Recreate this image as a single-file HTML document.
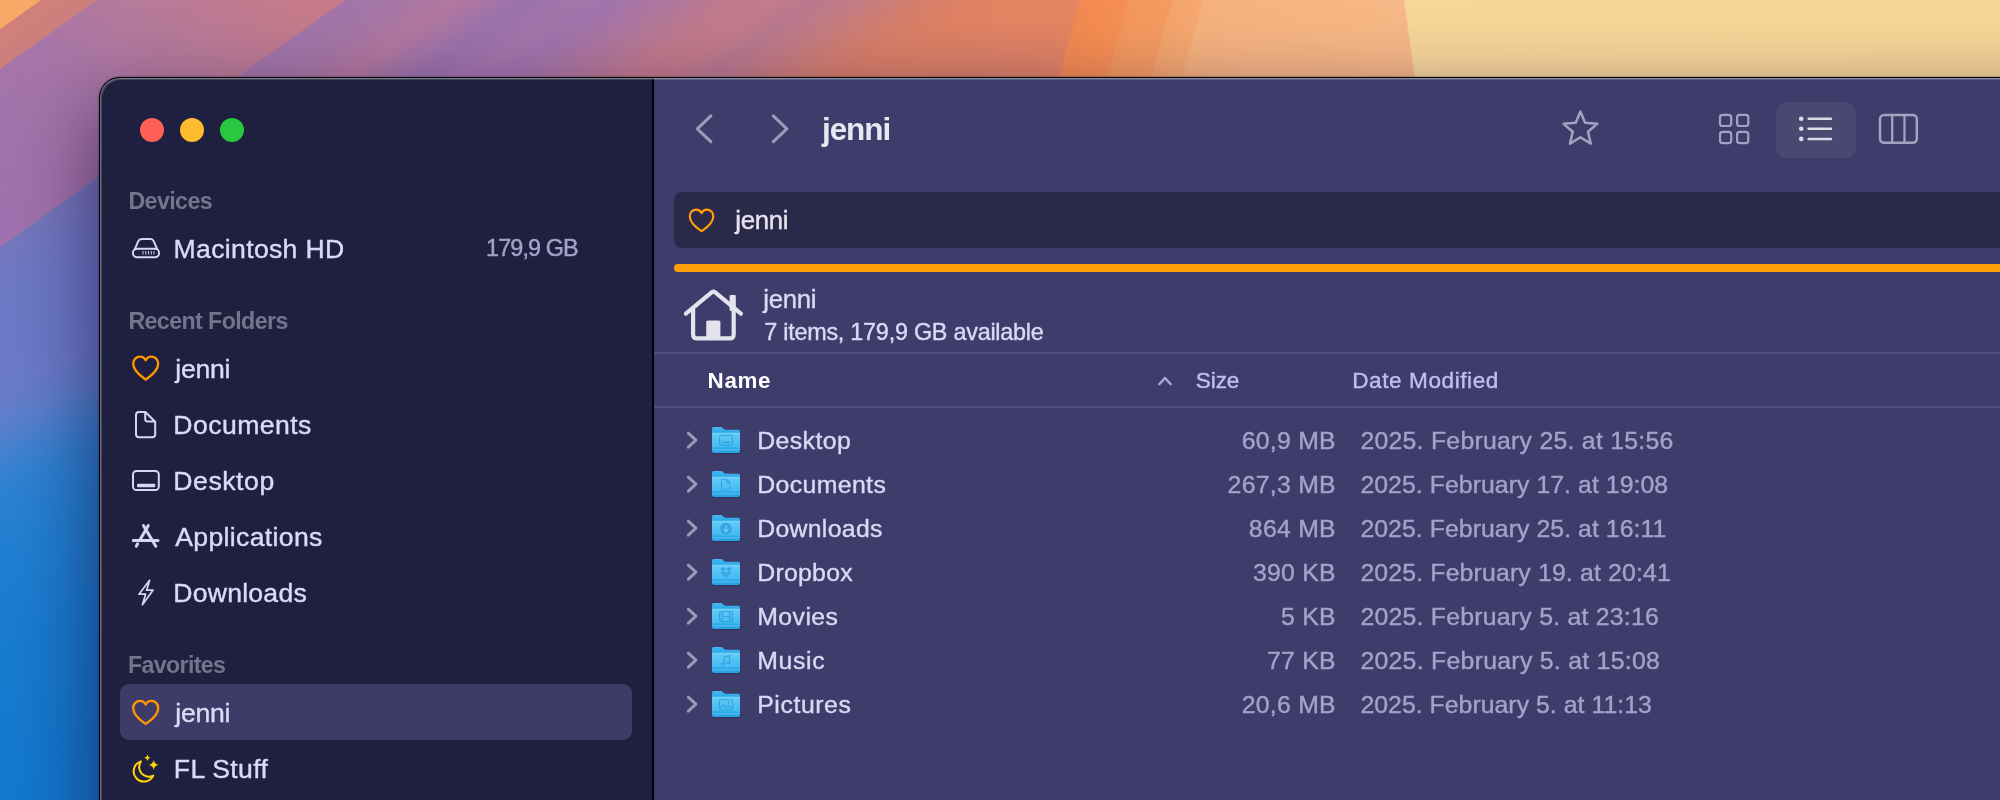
<!DOCTYPE html>
<html><head><meta charset="utf-8"><title>jenni</title>
<style>
*{margin:0;padding:0;box-sizing:border-box}
html,body{width:2000px;height:800px;overflow:hidden;background:#1a7bd0}
body{position:relative;font-family:"Liberation Sans",sans-serif}
.abs{position:absolute}
#wall{position:absolute;left:0;top:0}
#win{position:absolute;left:99px;top:77px;width:2000px;height:800px;border-radius:21px 0 0 0;background:#000;
 box-shadow:0 32px 80px 4px rgba(25,8,55,.6),0 0 2px rgba(0,0,0,.6)}
#side{position:absolute;left:1px;top:1px;width:552px;height:800px;background:#1f1f3f;border-radius:20px 0 0 0}
#main{position:absolute;left:555px;top:1px;width:1500px;height:800px;background:#3d3c6a}
#hl{position:absolute;left:1px;top:1px;width:2000px;height:800px;border-radius:20px 0 0 0;border-top:1px solid rgba(255,255,255,.40);border-left:1px solid rgba(255,255,255,.34);box-shadow:inset 1px 1px 0 rgba(255,255,255,.17);pointer-events:none}
#hl2{position:absolute;left:552px;top:1px;width:4px;height:2px;background:#000}
.tl{position:absolute;top:118px;width:24px;height:24px;border-radius:50%}
.t{position:absolute;white-space:pre;line-height:32px;font-family:"Liberation Sans",sans-serif}
#sel{position:absolute;left:120px;top:684px;width:512px;height:56px;border-radius:9px;background:#3d3c69}
#pathbar{position:absolute;left:674px;top:192px;width:1400px;height:56px;border-radius:8px;background:#2a2949}
#obar{position:absolute;left:674px;top:264px;width:1400px;height:8px;border-radius:4px;background:#ff9f0a}
.sep{position:absolute;left:654px;width:1400px;height:2px;background:#4f4e7b}
#lbtn{position:absolute;left:1776px;top:102px;width:80px;height:56px;border-radius:11px;background:#4a4871}
#icons{position:absolute;left:0;top:0}
#txt{position:absolute;left:0;top:0;width:2000px;height:800px;will-change:transform}
.r{-webkit-text-stroke:0.4px currentColor}
</style></head>
<body>
<svg id="wall" width="2000" height="800" viewBox="0 0 2000 800">
<defs>
<linearGradient id="gt" gradientUnits="userSpaceOnUse" x1="0" y1="0" x2="1200.0" y2="0" gradientTransform="skewX(-54.46)"><stop offset="0.0000" stop-color="#f8a968"/><stop offset="0.0333" stop-color="#f8a968"/><stop offset="0.0350" stop-color="#d0807a"/><stop offset="0.0800" stop-color="#cc7f7e"/><stop offset="0.0825" stop-color="#b0789f"/><stop offset="0.1467" stop-color="#b3799f"/><stop offset="0.2133" stop-color="#b97a97"/><stop offset="0.2800" stop-color="#c57b8b"/><stop offset="0.2867" stop-color="#c47b8a"/><stop offset="0.2883" stop-color="#a175a9"/><stop offset="0.3333" stop-color="#a676a6"/><stop offset="0.3800" stop-color="#b2789e"/><stop offset="0.4133" stop-color="#a575a8"/><stop offset="0.4383" stop-color="#9b72ad"/><stop offset="0.4800" stop-color="#a475ab"/><stop offset="0.5133" stop-color="#a274ac"/><stop offset="0.5633" stop-color="#b0779c"/><stop offset="0.6133" stop-color="#c07a8c"/><stop offset="0.6467" stop-color="#c27b8b"/><stop offset="0.6800" stop-color="#b8798f"/><stop offset="0.7133" stop-color="#c27c84"/><stop offset="0.7550" stop-color="#d07e72"/><stop offset="0.7967" stop-color="#dc8066"/><stop offset="0.8383" stop-color="#e28361"/><stop offset="1.0000" stop-color="#e38462"/></linearGradient>
<linearGradient id="gm" gradientUnits="userSpaceOnUse" x1="1000" y1="0" x2="1350" y2="0" gradientTransform="skewX(-15)"><stop offset="0.0000" stop-color="#e38462"/><stop offset="0.2200" stop-color="#e48462"/><stop offset="0.2343" stop-color="#f18a53"/><stop offset="0.3000" stop-color="#f58c50"/><stop offset="0.3629" stop-color="#f48f55"/><stop offset="0.3714" stop-color="#f4975d"/><stop offset="0.4886" stop-color="#f49b62"/><stop offset="0.4971" stop-color="#f4a46c"/><stop offset="0.5743" stop-color="#f5a870"/><stop offset="0.5857" stop-color="#f5b17d"/><stop offset="0.7143" stop-color="#f5b381"/><stop offset="1.0000" stop-color="#f5b683"/></linearGradient>
<linearGradient id="gr" gradientUnits="userSpaceOnUse" x1="1280" y1="0" x2="2100" y2="0" gradientTransform="skewX(8)"><stop offset="0.0000" stop-color="#f5b582"/><stop offset="0.1463" stop-color="#f6b886"/><stop offset="0.1500" stop-color="#f6b886"/><stop offset="0.1524" stop-color="#f7d699"/><stop offset="0.8780" stop-color="#f6d596"/><stop offset="1.0000" stop-color="#f6d596"/></linearGradient>
<linearGradient id="gl" gradientUnits="userSpaceOnUse" x1="0" y1="240" x2="0" y2="900" gradientTransform="skewY(-25)"><stop offset="0.0000" stop-color="#7677bd"/><stop offset="0.0455" stop-color="#7078c2"/><stop offset="0.1061" stop-color="#6c79c6"/><stop offset="0.2303" stop-color="#6a7bca"/><stop offset="0.2848" stop-color="#5c7fcc"/><stop offset="0.3303" stop-color="#4382d0"/><stop offset="0.3788" stop-color="#2f82d2"/><stop offset="0.4621" stop-color="#2280d2"/><stop offset="0.6212" stop-color="#187cd0"/><stop offset="0.8485" stop-color="#1378cf"/><stop offset="1.0000" stop-color="#1378cf"/></linearGradient>
<linearGradient id="gband" gradientUnits="userSpaceOnUse" x1="-68.6" y1="122.8" x2="228.6" y2="-100"><stop offset="0.000" stop-color="#9f72af"/><stop offset="0.231" stop-color="#a474ab"/><stop offset="0.385" stop-color="#a876a8"/><stop offset="0.538" stop-color="#b2799f"/><stop offset="0.692" stop-color="#b87a98"/><stop offset="0.846" stop-color="#bf7a90"/><stop offset="1.000" stop-color="#c67b89"/></linearGradient>
<radialGradient id="gpk" gradientUnits="userSpaceOnUse" cx="960" cy="100" r="170" gradientTransform="translate(0 100) scale(1 .5) translate(0 -100)"><stop offset="0" stop-color="#b06c84" stop-opacity=".26"/><stop offset=".6" stop-color="#b87080" stop-opacity=".14"/><stop offset="1" stop-color="#c87a76" stop-opacity="0"/></radialGradient>
</defs>
<rect x="0" y="0" width="1100" height="800" fill="url(#gt)"/>
<rect x="990" y="0" width="330" height="100" fill="url(#gm)"/>
<rect x="1290" y="0" width="710" height="100" fill="url(#gr)"/>
<polygon points="780,0 1078,0 1056,100 780,100" fill="url(#gpk)"/>
<polygon points="0,69.3 97,0 345,0 0,246.4" fill="url(#gband)"/>
<polygon points="0,247 236,78 236,800 0,800" fill="url(#gl)"/>
</svg>
<div id="win"><div id="side"></div><div id="main"></div><div id="hl"></div></div>
<div class="tl" style="left:140px;background:#ff5f57"></div>
<div class="tl" style="left:180px;background:#febc2e"></div>
<div class="tl" style="left:220px;background:#28c840"></div>
<div id="sel"></div>
<div id="pathbar"></div>
<div id="obar"></div>
<div class="sep" style="top:352px"></div>
<div class="sep" style="top:406px"></div>
<div id="lbtn"></div>
<svg id="icons" width="2000" height="800" viewBox="0 0 2000 800">
<defs>
<linearGradient id="fback" x1="0" y1="0" x2="0" y2="1"><stop offset="0" stop-color="#43b9f0"/><stop offset="1" stop-color="#1697dc"/></linearGradient>
<linearGradient id="ffront" x1="0" y1="0" x2="0" y2="1"><stop offset="0" stop-color="#78d5fa"/><stop offset=".12" stop-color="#5fc9f6"/><stop offset=".7" stop-color="#44baf2"/><stop offset=".76" stop-color="#33aeea"/><stop offset="1" stop-color="#24a1e3"/></linearGradient>
</defs>
<g fill="none" stroke="#d6d5f3" stroke-width="2" stroke-linejoin="round"><path d="M134.5 249.8 L138.3 241.1 Q139.2 239 141.6 239 H150.4 Q152.8 239 153.7 241.1 L157.5 249.8"/><rect x="132.9" y="248.7" width="26.2" height="8.6" rx="4.3"/></g>
<path d="M143 251V254.6M145.75 251V254.6M148.5 251V254.6M151.25 251V254.6M154 251V254.6" stroke="#d6d5f3" stroke-width="1.1" opacity=".9"/>
<path d="M145.70 379.50 C144.31 378.50 133.20 371.73 133.20 363.57 C133.20 359.59 136.28 356.60 140.05 356.60 C142.53 356.60 144.61 357.99 145.70 360.28 C146.79 357.99 148.87 356.60 151.35 356.60 C155.12 356.60 158.20 359.59 158.20 363.57 C158.20 371.73 147.09 378.50 145.70 379.50Z" fill="none" stroke="#ff9500" stroke-width="2.4" stroke-linejoin="round"/>
<path d="M145.70 723.90 C144.31 722.90 133.20 716.10 133.20 707.90 C133.20 703.90 136.28 700.90 140.05 700.90 C142.53 700.90 144.61 702.30 145.70 704.60 C146.79 702.30 148.87 700.90 151.35 700.90 C155.12 700.90 158.20 703.90 158.20 707.90 C158.20 716.10 147.09 722.90 145.70 723.90Z" fill="none" stroke="#ff9500" stroke-width="2.4" stroke-linejoin="round"/>
<path d="M701.55 231.10 C700.24 230.17 689.80 223.81 689.80 216.14 C689.80 212.40 692.69 209.60 696.23 209.60 C698.57 209.60 700.52 210.91 701.55 213.06 C702.58 210.91 704.53 209.60 706.87 209.60 C710.41 209.60 713.30 212.40 713.30 216.14 C713.30 223.81 702.86 230.17 701.55 231.10Z" fill="none" stroke="#ff9f0a" stroke-width="2.2" stroke-linejoin="round"/>
<path d="M139 412H145.4L155.2 421.8V434.2Q155.2 437.2 152.2 437.2H139Q136 437.2 136 434.2V415Q136 412 139 412ZM145.2 412.3V419Q145.2 421.6 147.8 421.6H154.8" fill="none" stroke="#d6d5f3" stroke-width="2" stroke-linejoin="round"/>
<rect x="133" y="470.9" width="25.8" height="19.2" rx="3.6" fill="none" stroke="#d6d5f3" stroke-width="2"/><rect x="137" y="483.7" width="18.2" height="3.5" rx="1" fill="#d6d5f3"/>
<path d="M148.3 525.6L139.6 540.4M137.6 543.8L136.3 546.2M143.4 525.6L155.8 546.2M133.3 540.6H158" fill="none" stroke="#d6d5f3" stroke-width="3" stroke-linecap="round"/>
<path d="M149.6 580.2L139 594.2H145.6L142.4 604.8L153 590.2H146.6Z" fill="none" stroke="#d6d5f3" stroke-width="1.7" stroke-linejoin="round"/>
<path d="M140.9 761.4A10.3 10.3 0 1 0 153.3 775.6A9.7 9.7 0 0 1 140.9 761.4Z" fill="none" stroke="#ffd60a" stroke-width="2" stroke-linejoin="round"/>
<path d="M147.4 754.4Q147.8 757.3 150.6 757.7Q147.8 758.1 147.4 761Q147 758.1 144.2 757.7Q147 757.3 147.4 754.4Z" fill="#ffd60a"/>
<path d="M153.7 759.9Q154.3 764.3 158.7 764.9Q154.3 765.5 153.7 769.9Q153.1 765.5 148.7 764.9Q153.1 764.3 153.7 759.9Z" fill="#ffd60a"/>
<path d="M710.9 115.9L697.3 128.8L710.9 141.7" fill="none" stroke="#9c9bb9" stroke-width="3" stroke-linecap="round" stroke-linejoin="round"/>
<path d="M773.3 115.9L786.9 128.8L773.3 141.7" fill="none" stroke="#9c9bb9" stroke-width="3" stroke-linecap="round" stroke-linejoin="round"/>
<polygon points="1580.40,111.60 1585.10,122.83 1597.23,123.83 1588.01,131.77 1590.80,143.62 1580.40,137.30 1570.00,143.62 1572.79,131.77 1563.57,123.83 1575.70,122.83" fill="none" stroke="#a3a2c0" stroke-width="2.5" stroke-linejoin="round"/>
<rect x="1720.0" y="114.8" width="11.2" height="11.2" rx="2.6" fill="none" stroke="#a3a2c0" stroke-width="2.2"/>
<rect x="1720.0" y="131.9" width="11.2" height="11.2" rx="2.6" fill="none" stroke="#a3a2c0" stroke-width="2.2"/>
<rect x="1737.1" y="114.8" width="11.2" height="11.2" rx="2.6" fill="none" stroke="#a3a2c0" stroke-width="2.2"/>
<rect x="1737.1" y="131.9" width="11.2" height="11.2" rx="2.6" fill="none" stroke="#a3a2c0" stroke-width="2.2"/>
<circle cx="1801.2" cy="118.8" r="2.3" fill="#dcdbea"/><path d="M1808.6 118.8H1831" stroke="#dcdbea" stroke-width="2.5" stroke-linecap="round"/>
<circle cx="1801.2" cy="128.8" r="2.3" fill="#dcdbea"/><path d="M1808.6 128.8H1831" stroke="#dcdbea" stroke-width="2.5" stroke-linecap="round"/>
<circle cx="1801.2" cy="138.9" r="2.3" fill="#dcdbea"/><path d="M1808.6 138.9H1831" stroke="#dcdbea" stroke-width="2.5" stroke-linecap="round"/>
<rect x="1880" y="114.9" width="36.8" height="27.9" rx="4" fill="none" stroke="#a3a2c0" stroke-width="2.5"/><path d="M1892.2 115V142.8M1904.5 115V142.8" stroke="#a3a2c0" stroke-width="2.3"/>
<g fill="none" stroke="#e3e2ed" stroke-width="4.2" stroke-linecap="round" stroke-linejoin="round"><path d="M685.9 313.6L711.6 292.4Q713.4 291 715.2 292.4L740.9 313.6"/><path d="M693.1 309V334.4Q693.1 338.4 697.1 338.4H729.7Q733.7 338.4 733.7 334.4V309"/></g>
<rect x="729.6" y="294.9" width="6.2" height="16" rx="1" fill="#e3e2ed"/>
<path d="M706.2 338.6V322Q706.2 320.4 707.8 320.4H718.8Q720.4 320.4 720.4 322V338.6Z" fill="#e3e2ed"/>
<path d="M1159.3 384.2L1165 378L1170.7 384.2" fill="none" stroke="#a9a8d6" stroke-width="2.4" stroke-linecap="round" stroke-linejoin="round"/>
<path d="M688.3 433.2L695.9 440.2L688.3 447.2" fill="none" stroke="#9a99b6" stroke-width="3" stroke-linecap="round" stroke-linejoin="round"/>
<g transform="translate(712,426.8)"><path d="M1.2 26.6 H26.8 Q28.3 26.6 28.3 25.4 V24 H-0.3 V25.4 Q-0.3 26.6 1.2 26.6Z" fill="#15142e" opacity=".55"/><path d="M0 1.8 Q0 0.2 1.6 0.2 H8.6 Q9.8 0.2 10.6 1 L12 2.3 Q12.7 2.9 13.8 2.9 H26.4 Q28 2.9 28 4.5 V12 H0Z" fill="url(#fback)"/><path d="M0 7.2 Q0 5.9 1.3 5.9 H26.7 Q28 5.9 28 7.2 V24.7 Q28 26.1 26.6 26.1 H1.4 Q0 26.1 0 24.7Z" fill="url(#ffront)"/><rect x="0" y="20.9" width="28" height="1.1" fill="#1d9fe0" opacity=".55"/><rect x="0" y="22.1" width="28" height="1.5" fill="#7fd6fb" opacity=".38"/><rect x="7.6" y="8.6" width="12.8" height="10" rx="1.8" fill="none" stroke="#2f9ce0" stroke-width="1.1" opacity=".8"/><path d="M10.3 15.6H17.7" stroke="#2f9ce0" stroke-width="1.4" opacity=".85"/></g>
<path d="M688.3 477.2L695.9 484.2L688.3 491.2" fill="none" stroke="#9a99b6" stroke-width="3" stroke-linecap="round" stroke-linejoin="round"/>
<g transform="translate(712,470.8)"><path d="M1.2 26.6 H26.8 Q28.3 26.6 28.3 25.4 V24 H-0.3 V25.4 Q-0.3 26.6 1.2 26.6Z" fill="#15142e" opacity=".55"/><path d="M0 1.8 Q0 0.2 1.6 0.2 H8.6 Q9.8 0.2 10.6 1 L12 2.3 Q12.7 2.9 13.8 2.9 H26.4 Q28 2.9 28 4.5 V12 H0Z" fill="url(#fback)"/><path d="M0 7.2 Q0 5.9 1.3 5.9 H26.7 Q28 5.9 28 7.2 V24.7 Q28 26.1 26.6 26.1 H1.4 Q0 26.1 0 24.7Z" fill="url(#ffront)"/><rect x="0" y="20.9" width="28" height="1.1" fill="#1d9fe0" opacity=".55"/><rect x="0" y="22.1" width="28" height="1.5" fill="#7fd6fb" opacity=".38"/><path d="M10.3 8.4H14.6L17.8 11.6V18.6Q17.8 19.4 17 19.4H10.3Q9.5 19.4 9.5 18.6V9.2Q9.5 8.4 10.3 8.4ZM14.4 8.6V11.8H17.6" fill="none" stroke="#2f9ce0" stroke-width="1.1" opacity=".8"/></g>
<path d="M688.3 521.2L695.9 528.2L688.3 535.2" fill="none" stroke="#9a99b6" stroke-width="3" stroke-linecap="round" stroke-linejoin="round"/>
<g transform="translate(712,514.8)"><path d="M1.2 26.6 H26.8 Q28.3 26.6 28.3 25.4 V24 H-0.3 V25.4 Q-0.3 26.6 1.2 26.6Z" fill="#15142e" opacity=".55"/><path d="M0 1.8 Q0 0.2 1.6 0.2 H8.6 Q9.8 0.2 10.6 1 L12 2.3 Q12.7 2.9 13.8 2.9 H26.4 Q28 2.9 28 4.5 V12 H0Z" fill="url(#fback)"/><path d="M0 7.2 Q0 5.9 1.3 5.9 H26.7 Q28 5.9 28 7.2 V24.7 Q28 26.1 26.6 26.1 H1.4 Q0 26.1 0 24.7Z" fill="url(#ffront)"/><rect x="0" y="20.9" width="28" height="1.1" fill="#1d9fe0" opacity=".55"/><rect x="0" y="22.1" width="28" height="1.5" fill="#7fd6fb" opacity=".38"/><circle cx="14" cy="13.8" r="5.9" fill="#2f9ce0" opacity=".8"/><path d="M14 10.6V16.6M11.5 14.4L14 16.9L16.5 14.4" fill="none" stroke="#6fd0f8" stroke-width="1.3"/></g>
<path d="M688.3 565.2L695.9 572.2L688.3 579.2" fill="none" stroke="#9a99b6" stroke-width="3" stroke-linecap="round" stroke-linejoin="round"/>
<g transform="translate(712,558.8)"><path d="M1.2 26.6 H26.8 Q28.3 26.6 28.3 25.4 V24 H-0.3 V25.4 Q-0.3 26.6 1.2 26.6Z" fill="#15142e" opacity=".55"/><path d="M0 1.8 Q0 0.2 1.6 0.2 H8.6 Q9.8 0.2 10.6 1 L12 2.3 Q12.7 2.9 13.8 2.9 H26.4 Q28 2.9 28 4.5 V12 H0Z" fill="url(#fback)"/><path d="M0 7.2 Q0 5.9 1.3 5.9 H26.7 Q28 5.9 28 7.2 V24.7 Q28 26.1 26.6 26.1 H1.4 Q0 26.1 0 24.7Z" fill="url(#ffront)"/><rect x="0" y="20.9" width="28" height="1.1" fill="#1d9fe0" opacity=".55"/><rect x="0" y="22.1" width="28" height="1.5" fill="#7fd6fb" opacity=".38"/><g fill="#2f9ce0" opacity=".85"><path d="M11.1 8.2L14 10.1L11.1 12L8.2 10.1Z"/><path d="M16.9 8.2L19.8 10.1L16.9 12L14 10.1Z"/><path d="M11.1 12.2L14 14.1L11.1 16L8.2 14.1Z"/><path d="M16.9 12.2L19.8 14.1L16.9 16L14 14.1Z"/><path d="M14 15L16.7 16.8L14 18.6L11.3 16.8Z"/></g></g>
<path d="M688.3 609.2L695.9 616.2L688.3 623.2" fill="none" stroke="#9a99b6" stroke-width="3" stroke-linecap="round" stroke-linejoin="round"/>
<g transform="translate(712,602.8)"><path d="M1.2 26.6 H26.8 Q28.3 26.6 28.3 25.4 V24 H-0.3 V25.4 Q-0.3 26.6 1.2 26.6Z" fill="#15142e" opacity=".55"/><path d="M0 1.8 Q0 0.2 1.6 0.2 H8.6 Q9.8 0.2 10.6 1 L12 2.3 Q12.7 2.9 13.8 2.9 H26.4 Q28 2.9 28 4.5 V12 H0Z" fill="url(#fback)"/><path d="M0 7.2 Q0 5.9 1.3 5.9 H26.7 Q28 5.9 28 7.2 V24.7 Q28 26.1 26.6 26.1 H1.4 Q0 26.1 0 24.7Z" fill="url(#ffront)"/><rect x="0" y="20.9" width="28" height="1.1" fill="#1d9fe0" opacity=".55"/><rect x="0" y="22.1" width="28" height="1.5" fill="#7fd6fb" opacity=".38"/><rect x="7.6" y="8.8" width="12.8" height="10" rx="1.2" fill="none" stroke="#2f9ce0" stroke-width="1.1" opacity=".8"/><path d="M10.4 8.8V18.8M17.6 8.8V18.8M10.4 13.8H17.6M7.6 11.4H10.4M7.6 16.2H10.4M17.6 11.4H20.4M17.6 16.2H20.4" stroke="#2f9ce0" stroke-width="1" opacity=".8" fill="none"/></g>
<path d="M688.3 653.2L695.9 660.2L688.3 667.2" fill="none" stroke="#9a99b6" stroke-width="3" stroke-linecap="round" stroke-linejoin="round"/>
<g transform="translate(712,646.8)"><path d="M1.2 26.6 H26.8 Q28.3 26.6 28.3 25.4 V24 H-0.3 V25.4 Q-0.3 26.6 1.2 26.6Z" fill="#15142e" opacity=".55"/><path d="M0 1.8 Q0 0.2 1.6 0.2 H8.6 Q9.8 0.2 10.6 1 L12 2.3 Q12.7 2.9 13.8 2.9 H26.4 Q28 2.9 28 4.5 V12 H0Z" fill="url(#fback)"/><path d="M0 7.2 Q0 5.9 1.3 5.9 H26.7 Q28 5.9 28 7.2 V24.7 Q28 26.1 26.6 26.1 H1.4 Q0 26.1 0 24.7Z" fill="url(#ffront)"/><rect x="0" y="20.9" width="28" height="1.1" fill="#1d9fe0" opacity=".55"/><rect x="0" y="22.1" width="28" height="1.5" fill="#7fd6fb" opacity=".38"/><path d="M12.2 17.2V10.2L17.6 8.9V15.9" fill="none" stroke="#2f9ce0" stroke-width="1.2" opacity=".85"/><ellipse cx="10.9" cy="17.3" rx="1.7" ry="1.4" fill="#2f9ce0" opacity=".85"/><ellipse cx="16.3" cy="16" rx="1.7" ry="1.4" fill="#2f9ce0" opacity=".85"/></g>
<path d="M688.3 697.2L695.9 704.2L688.3 711.2" fill="none" stroke="#9a99b6" stroke-width="3" stroke-linecap="round" stroke-linejoin="round"/>
<g transform="translate(712,690.8)"><path d="M1.2 26.6 H26.8 Q28.3 26.6 28.3 25.4 V24 H-0.3 V25.4 Q-0.3 26.6 1.2 26.6Z" fill="#15142e" opacity=".55"/><path d="M0 1.8 Q0 0.2 1.6 0.2 H8.6 Q9.8 0.2 10.6 1 L12 2.3 Q12.7 2.9 13.8 2.9 H26.4 Q28 2.9 28 4.5 V12 H0Z" fill="url(#fback)"/><path d="M0 7.2 Q0 5.9 1.3 5.9 H26.7 Q28 5.9 28 7.2 V24.7 Q28 26.1 26.6 26.1 H1.4 Q0 26.1 0 24.7Z" fill="url(#ffront)"/><rect x="0" y="20.9" width="28" height="1.1" fill="#1d9fe0" opacity=".55"/><rect x="0" y="22.1" width="28" height="1.5" fill="#7fd6fb" opacity=".38"/><rect x="7.4" y="9" width="13.2" height="10" rx="1.6" fill="none" stroke="#2f9ce0" stroke-width="1.1" opacity=".8"/><path d="M8 17.6L11.6 13.8L14.2 16.4L16 14.8L20 18.4" fill="none" stroke="#2f9ce0" stroke-width="1.1" opacity=".8"/><circle cx="16.4" cy="12" r="1.1" fill="#2f9ce0" opacity=".8"/></g>
</svg>
<div id="txt">
<span class="t" style="left:128.40px;top:185px;font-size:23.2px;font-weight:700;color:#75748d;letter-spacing:-0.562px">Devices</span>
<span class="t r" style="left:173.60px;top:233px;font-size:26.6px;font-weight:400;color:#dbdbf7;letter-spacing:0.327px">Macintosh HD</span>
<span class="t r" style="left:486.00px;top:232px;font-size:23.4px;font-weight:400;color:#a3a3c9;letter-spacing:-0.875px">179,9 GB</span>
<span class="t" style="left:128.40px;top:305px;font-size:23.2px;font-weight:700;color:#75748d;letter-spacing:-0.586px">Recent Folders</span>
<span class="t r" style="left:175.20px;top:353px;font-size:26.6px;font-weight:400;color:#dbdbf7;letter-spacing:-0.220px">jenni</span>
<span class="t r" style="left:173.30px;top:409px;font-size:26.6px;font-weight:400;color:#dbdbf7;letter-spacing:0.449px">Documents</span>
<span class="t r" style="left:173.30px;top:465px;font-size:26.6px;font-weight:400;color:#dbdbf7;letter-spacing:0.555px">Desktop</span>
<span class="t r" style="left:175.30px;top:521px;font-size:26.6px;font-weight:400;color:#dbdbf7;letter-spacing:0.336px">Applications</span>
<span class="t r" style="left:173.30px;top:577px;font-size:26.6px;font-weight:400;color:#dbdbf7;letter-spacing:0.229px">Downloads</span>
<span class="t" style="left:128.00px;top:649px;font-size:23.2px;font-weight:700;color:#75748d;letter-spacing:-0.650px">Favorites</span>
<span class="t r" style="left:175.20px;top:697px;font-size:26.6px;font-weight:400;color:#dbdbf7;letter-spacing:-0.220px">jenni</span>
<span class="t r" style="left:173.80px;top:753px;font-size:26.6px;font-weight:400;color:#dbdbf7;letter-spacing:0.336px">FL Stuff</span>
<span class="t" style="left:822.00px;top:113px;font-size:31.5px;font-weight:700;color:#e7e6f1;letter-spacing:-1.088px">jenni</span>
<span class="t r" style="left:735.20px;top:204px;font-size:25.8px;font-weight:400;color:#e4e3ee;letter-spacing:-0.293px">jenni</span>
<span class="t r" style="left:763.20px;top:283px;font-size:25.8px;font-weight:400;color:#d9d9f5;letter-spacing:-0.293px">jenni</span>
<span class="t r" style="left:764.20px;top:316px;font-size:23.4px;font-weight:400;color:#d9d9f5;letter-spacing:-0.248px">7 items, 179,9 GB available</span>
<span class="t" style="left:707.60px;top:365px;font-size:22.4px;font-weight:700;color:#ffffff;letter-spacing:0.623px">Name</span>
<span class="t r" style="left:1195.80px;top:365px;font-size:22.6px;font-weight:400;color:#bfbef0;letter-spacing:-0.129px">Size</span>
<span class="t r" style="left:1352.20px;top:365px;font-size:22.6px;font-weight:400;color:#bfbef0;letter-spacing:0.564px">Date Modified</span>
<span class="t r" style="left:757.20px;top:425px;font-size:24.8px;font-weight:400;color:#d9d9f5;letter-spacing:0.437px">Desktop</span>
<span class="t r" style="left:1241.67px;top:425px;font-size:24.8px;font-weight:400;color:#a3a2c9;letter-spacing:0.270px">60,9 MB</span>
<span class="t r" style="left:1360.40px;top:425px;font-size:24.8px;font-weight:400;color:#a3a2c9;letter-spacing:0.264px">2025. February 25. at 15:56</span>
<span class="t r" style="left:757.20px;top:469px;font-size:24.8px;font-weight:400;color:#d9d9f5;letter-spacing:0.398px">Documents</span>
<span class="t r" style="left:1227.61px;top:469px;font-size:24.8px;font-weight:400;color:#a3a2c9;letter-spacing:0.270px">267,3 MB</span>
<span class="t r" style="left:1360.40px;top:469px;font-size:24.8px;font-weight:400;color:#a3a2c9;letter-spacing:0.064px">2025. February 17. at 19:08</span>
<span class="t r" style="left:757.20px;top:513px;font-size:24.8px;font-weight:400;color:#d9d9f5;letter-spacing:0.315px">Downloads</span>
<span class="t r" style="left:1248.83px;top:513px;font-size:24.8px;font-weight:400;color:#a3a2c9;letter-spacing:0.270px">864 MB</span>
<span class="t r" style="left:1360.40px;top:513px;font-size:24.8px;font-weight:400;color:#a3a2c9;letter-spacing:0.065px">2025. February 25. at 16:11</span>
<span class="t r" style="left:757.20px;top:557px;font-size:24.8px;font-weight:400;color:#d9d9f5;letter-spacing:0.295px">Dropbox</span>
<span class="t r" style="left:1252.95px;top:557px;font-size:24.8px;font-weight:400;color:#a3a2c9;letter-spacing:0.270px">390 KB</span>
<span class="t r" style="left:1360.40px;top:557px;font-size:24.8px;font-weight:400;color:#a3a2c9;letter-spacing:0.167px">2025. February 19. at 20:41</span>
<span class="t r" style="left:757.20px;top:601px;font-size:24.8px;font-weight:400;color:#d9d9f5;letter-spacing:0.451px">Movies</span>
<span class="t r" style="left:1281.07px;top:601px;font-size:24.8px;font-weight:400;color:#a3a2c9;letter-spacing:0.270px">5 KB</span>
<span class="t r" style="left:1360.40px;top:601px;font-size:24.8px;font-weight:400;color:#a3a2c9;letter-spacing:0.246px">2025. February 5. at 23:16</span>
<span class="t r" style="left:757.20px;top:645px;font-size:24.8px;font-weight:400;color:#d9d9f5;letter-spacing:0.686px">Music</span>
<span class="t r" style="left:1267.01px;top:645px;font-size:24.8px;font-weight:400;color:#a3a2c9;letter-spacing:0.270px">77 KB</span>
<span class="t r" style="left:1360.40px;top:645px;font-size:24.8px;font-weight:400;color:#a3a2c9;letter-spacing:0.286px">2025. February 5. at 15:08</span>
<span class="t r" style="left:757.20px;top:689px;font-size:24.8px;font-weight:400;color:#d9d9f5;letter-spacing:0.589px">Pictures</span>
<span class="t r" style="left:1241.67px;top:689px;font-size:24.8px;font-weight:400;color:#a3a2c9;letter-spacing:0.270px">20,6 MB</span>
<span class="t r" style="left:1360.40px;top:689px;font-size:24.8px;font-weight:400;color:#a3a2c9;letter-spacing:0.039px">2025. February 5. at 11:13</span>
</div>
</body></html>
